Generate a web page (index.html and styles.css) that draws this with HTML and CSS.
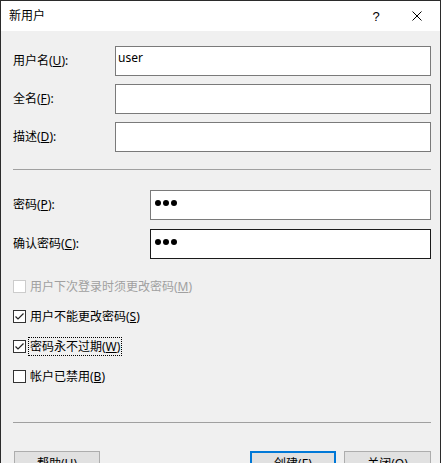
FILE: index.html
```html
<!DOCTYPE html>
<html lang="zh-CN">
<head>
<meta charset="utf-8">
<title>新用户</title>
<link rel="stylesheet" href="styles.css">
</head>
<body>
<div class="window">
  <div class="titlebar">
    <span class="title">新用户</span>
    <span class="tb-btn help">?</span>
    <span class="tb-btn close">
      <svg width="10" height="10" viewBox="0 0 10 10"><path d="M0.5 0.5 L9.5 9.5 M9.5 0.5 L0.5 9.5" stroke="#000" stroke-width="1" fill="none"/></svg>
    </span>
  </div>
  <div class="content">
    <div class="fields">
      <div class="row"><label class="lbl">用户名(<u>U</u>):</label><div class="box">user</div></div>
      <div class="row"><label class="lbl">全名(<u>F</u>):</label><div class="box"></div></div>
      <div class="row"><label class="lbl">描述(<u>D</u>):</label><div class="box"></div></div>
    </div>
    <div class="sep sep1"></div>
    <div class="fields pw">
      <div class="row"><label class="lbl">密码(<u>P</u>):</label><div class="box"><span class="dot"></span><span class="dot"></span><span class="dot"></span></div></div>
      <div class="row"><label class="lbl">确认密码(<u>C</u>):</label><div class="box focus"><span class="dot"></span><span class="dot"></span><span class="dot"></span></div></div>
    </div>
    <div class="checks">
      <div class="chk disabled"><span class="cb"></span><span class="ctext">用户下次登录时须更改密码(<u>M</u>)</span></div>
      <div class="chk"><span class="cb on"><svg width="11" height="11" viewBox="0 0 11 11"><path d="M1.5 5.5 L4 8 L9.5 2.5" stroke="#222" stroke-width="1.2" fill="none"/></svg></span><span class="ctext">用户不能更改密码(<u>S</u>)</span></div>
      <div class="chk"><span class="cb on"><svg width="11" height="11" viewBox="0 0 11 11"><path d="M1.5 5.5 L4 8 L9.5 2.5" stroke="#222" stroke-width="1.2" fill="none"/></svg></span><span class="ctext focused">密码永不过期(<u>W</u>)</span></div>
      <div class="chk"><span class="cb"></span><span class="ctext">帐户已禁用(<u>B</u>)</span></div>
    </div>
    <div class="sep sep2"></div>
    <div class="buttons">
      <button class="btn">帮助(<u>H</u>)</button>
      <span class="spacer"></span>
      <button class="btn default">创建(<u>E</u>)</button>
      <button class="btn">关闭(<u>O</u>)</button>
    </div>
  </div>
</div>
</body>
</html>
```
FILE: styles.css
```css
* { box-sizing: border-box; }
html, body { margin: 0; padding: 0; height: 100%; overflow: hidden; }
body {
  font-family: "Noto Sans", "Noto Sans CJK SC", sans-serif;
  font-size: 12px;
  color: #000;
  background: #f0f0f0;
}
.window {
  height: 100%;
  border: 1px solid #2b2b2b;
  border-bottom: none;
  display: flex;
  flex-direction: column;
  background: #f0f0f0;
}
.titlebar {
  height: 30px;
  background: #fff;
  display: flex;
  align-items: center;
  flex: none;
}
.title {
  padding-left: 8px;
  flex: 1;
  font-size: 12px;
  line-height: 16px;
}
.tb-btn {
  width: 44px;
  height: 30px;
  display: flex;
  align-items: center;
  justify-content: center;
}
.help { font-family: "Liberation Sans", sans-serif; font-size: 13px; margin-right: -4px; padding-top: 1px; }
.close { width: 46px; padding-bottom: 1px; }
.content {
  flex: 1;
  padding: 15px 9px 0 12px;
}
.fields { display: flex; flex-direction: column; gap: 8px; }
.fields.pw { gap: 9px; }
.row { display: flex; align-items: center; height: 30px; }
.lbl { width: 102px; flex: none; line-height: 16px; }
.pw .lbl { width: 137px; }
.box {
  flex: 1;
  height: 30px;
  background: #fff;
  border: 1px solid #7a7a7a;
  padding: 3px 2px 0 2px;
  line-height: 15px;
  font-family: "Noto Sans", sans-serif;
  font-size: 12px;
  display: flex;
  align-items: flex-start;
}
.pw .box { padding: 9px 4px 0 4px; gap: 2px; }
.box.focus { border-color: #1a1a1a; }
.dot {
  width: 6px; height: 6px; border-radius: 50%;
  background: #000;
  display: inline-block;
}
.sep { height: 1px; background: #a0a0a0; }
.sep1 { margin: 17px 0 20px; }
.checks {
  margin-top: 18px;
  display: flex;
  flex-direction: column;
  gap: 11px;
}
.chk { display: flex; align-items: center; height: 19px; }
.cb {
  width: 13px; height: 13px;
  border: 1px solid #333;
  background: #fff;
  flex: none;
  display: flex; align-items: center; justify-content: center;
  margin-right: 2px;
}
.ctext { line-height: 17px; padding: 0 1px; border: 1px dotted transparent; }
.ctext.focused { border-color: #000; }
.chk.disabled .cb { border-color: #cccccc; }
.chk.disabled .ctext { color: #a0a0a0; }
.sep2 { margin-top: 36px; }
.buttons {
  margin-top: 28px;
  display: flex;
  gap: 8px;
  padding-left: 1px;
}
.spacer { flex: 1; }
.btn {
  width: 86px;
  height: 26px;
  font-family: "Noto Sans", "Noto Sans CJK SC", sans-serif;
  font-size: 12px;
  background: #e1e1e1;
  border: 1px solid #adadad;
  color: #000;
  padding: 0;
  line-height: 16px;
}
.btn.default { border: 2px solid #0078d7; }
.buttons .btn:last-child { width: 87px; }
```
